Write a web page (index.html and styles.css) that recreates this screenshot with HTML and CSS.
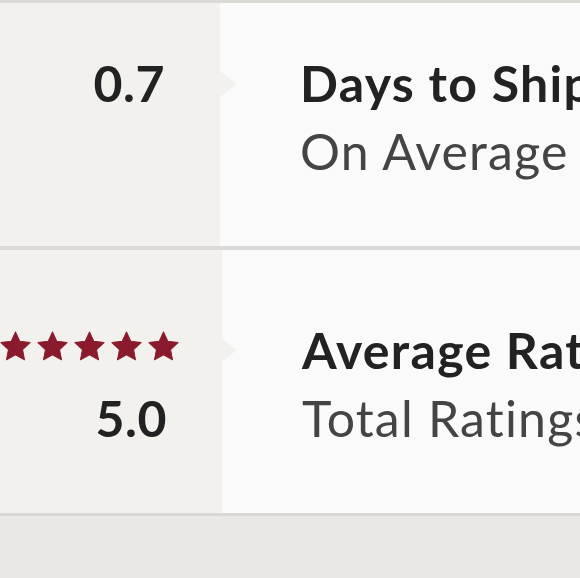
FILE: index.html
```html
<!DOCTYPE html>
<html lang="en">
<head>
<meta charset="utf-8">
<title>Shop stats</title>
<link rel="stylesheet" href="styles.css">
</head>
<body>
<div class="stats">
  <div class="row row--ship">
    <div class="label-cell">
      <div class="value">0.7</div>
    </div>
    <div class="info-cell">
      <div class="title">Days to Ship</div>
      <div class="subtitle">On Average</div>
    </div>
  </div>
  <div class="row row--rating">
    <div class="label-cell">
      <div class="stars">
        <svg class="star" viewBox="0 0 24 23.5"><path d="M12 .8L15.41 8.11 23.41 9.09 17.52 14.59 19.05 22.51 12 18.6 4.95 22.51 6.48 14.59 .59 9.09 8.59 8.11Z"/></svg>
        <svg class="star" viewBox="0 0 24 23.5"><path d="M12 .8L15.41 8.11 23.41 9.09 17.52 14.59 19.05 22.51 12 18.6 4.95 22.51 6.48 14.59 .59 9.09 8.59 8.11Z"/></svg>
        <svg class="star" viewBox="0 0 24 23.5"><path d="M12 .8L15.41 8.11 23.41 9.09 17.52 14.59 19.05 22.51 12 18.6 4.95 22.51 6.48 14.59 .59 9.09 8.59 8.11Z"/></svg>
        <svg class="star" viewBox="0 0 24 23.5"><path d="M12 .8L15.41 8.11 23.41 9.09 17.52 14.59 19.05 22.51 12 18.6 4.95 22.51 6.48 14.59 .59 9.09 8.59 8.11Z"/></svg>
        <svg class="star" viewBox="0 0 24 23.5"><path d="M12 .8L15.41 8.11 23.41 9.09 17.52 14.59 19.05 22.51 12 18.6 4.95 22.51 6.48 14.59 .59 9.09 8.59 8.11Z"/></svg>
      </div>
      <div class="value">5.0</div>
    </div>
    <div class="info-cell">
      <div class="title">Average Rating</div>
      <div class="subtitle">Total Ratings</div>
    </div>
  </div>
</div>
<div class="footer-space"></div>
</body>
</html>
```
FILE: styles.css
```css
html, body {
  margin: 0;
  padding: 0;
  width: 580px;
  height: 578px;
  overflow: hidden;
  background: #eae8e5;
  font-family: "Lato", "Open Sans", sans-serif;
}

.stats {
  border-top: 3px solid #dbd9d6;
  border-bottom: 3px solid #dad8d5;
  overflow: hidden;
}

.row {
  display: flex;
  white-space: nowrap;
}

.row--ship {
  height: 243px;
}

.row--rating {
  height: 263px;
  border-top: 4px solid #dcdad7;
  box-shadow: inset 0 1px 0 #d2d0cc;
}

.label-cell {
  position: relative;
  flex: 0 0 220px;
  box-sizing: border-box;
  padding-right: 55px;
  background: #f3f1ed;
  display: flex;
  flex-direction: column;
  align-items: flex-end;
  z-index: 1;
}

.label-cell::after {
  content: "";
  position: absolute;
  left: 220px;
  width: 0;
  height: 0;
  border-top: 13px solid transparent;
  border-bottom: 13px solid transparent;
  border-left: 17px solid #f3f1ed;
}

.row--ship .label-cell { padding-top: 46px; }
.row--ship .label-cell::after { top: 68px; }

.row--rating .label-cell { padding-top: 66px; }
.row--rating .label-cell::after { top: 87px; }

.info-cell {
  flex: 1 1 auto;
  background: #fafafa;
  padding-left: 82px;
  overflow: hidden;
}

.row--ship .info-cell { padding-top: 46px; }
.row--rating .info-cell { padding-top: 66px; }

.value {
  font-size: 50px;
  line-height: 68px;
  font-weight: 700;
  color: #222222;
  letter-spacing: 0.5px;
}

.title {
  font-size: 50px;
  line-height: 68px;
  font-weight: 700;
  color: #222222;
  letter-spacing: 1.3px;
  margin-left: -2px;
}

.subtitle {
  font-size: 50px;
  line-height: 68px;
  font-weight: 400;
  color: #444444;
  letter-spacing: 1.2px;
  margin-left: -2px;
}

.stars {
  height: 68px;
  display: flex;
  align-items: center;
  gap: 6px;
  margin-right: -12px;
  margin-top: -4px;
  margin-bottom: 4px;
}

.star {
  width: 31px;
  height: 30px;
  fill: #8a1b2c;
  stroke: #8a1b2c;
  stroke-width: 0.8;
  stroke-linejoin: round;
  flex: 0 0 auto;
}

.footer-space {
  height: 62px;
  background: #eae8e5;
}
```
